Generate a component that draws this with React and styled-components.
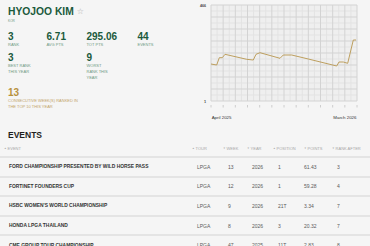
import React from 'react';
import styled, { createGlobalStyle } from 'styled-components';

const GlobalStyle = createGlobalStyle`
  html, body {
    margin: 0;
    padding: 0;
    background: #f5f5f5;
    overflow: hidden;
  }
  body {
    font-family: "Liberation Sans", Arial, sans-serif;
  }
`;

const Page = styled.div`
  width: 370px;
  height: 246px;
  overflow: hidden;
`;

const Top = styled.div`
  display: flex;
  height: 125px;
`;

const Profile = styled.div`
  flex: 1;
  padding: 6px 0 0 8px;
`;

const Name = styled.h1`
  margin: 0;
  font-size: 10.3px;
  line-height: 12px;
  font-weight: 700;
  color: #1b5a3c;
  display: flex;
  align-items: center;
  gap: 3px;
`;

const Star = styled.span`
  font-family: "DejaVu Sans", sans-serif;
  font-size: 8px;
  font-weight: 400;
  color: #a9a9a9;
`;

const Country = styled.div`
  font-size: 3.2px;
  line-height: 5px;
  margin-top: 1px;
  color: #6f9a83;
`;

const StatGrid = styled.div`
  display: grid;
  grid-template-columns: 38.5px 40px 51px auto;
  row-gap: 5.5px;
  margin-top: 7.5px;
`;

const Stat = styled.div`
  grid-column: span ${p => p.$span || 1};
`;

const Value = styled.div`
  font-size: 10px;
  line-height: 10px;
  font-weight: 700;
  color: ${p => (p.$gold ? '#b8913c' : '#1b5a3c')};
`;

const Label = styled.div`
  font-size: 4px;
  line-height: 6px;
  text-transform: uppercase;
  color: ${p => (p.$gold ? '#c3a468' : '#6f9a83')};
  max-width: ${p => p.$max || 25}px;
`;

const Streak = styled.div`
  margin-top: 7px;
`;

const Chart = styled.svg`
  width: 182px;
  height: 125px;
  display: block;
  flex: none;
`;

const Heading = styled.h2`
  margin: 5.3px 0 0 8px;
  font-size: 8.5px;
  line-height: 10px;
  font-weight: 700;
  color: #1f1f1f;
`;

const COLS = '188px 31px 24px 26px 26px 33px 1fr';

const HeadRow = styled.div`
  display: grid;
  grid-template-columns: ${COLS};
  height: 15.7px;
  align-items: center;
  padding-left: 9px;
  border-bottom: 2px solid #e4e4e4;
`;

const HeadCell = styled.div`
  font-size: 4px;
  color: #a8a8a8;
  white-space: nowrap;
  margin-left: ${p => (p.$flush ? 0 : -5)}px;
`;

const Arrow = styled.span`
  font-size: 2.6px;
  margin-right: 1px;
  vertical-align: 0.3px;
`;

const Row = styled.div`
  display: grid;
  grid-template-columns: ${COLS};
  height: 17.6px;
  align-items: center;
  padding-left: 9px;
  border-bottom: 2px solid #e4e4e4;
`;

const EventName = styled.div`
  font-size: 4.9px;
  font-weight: 700;
  color: #333;
  white-space: nowrap;
`;

const Cell = styled.div`
  font-size: 5px;
  color: #5a5a5a;
`;

const headers = [
  ['EVENT', '▲'],
  ['TOUR', '▲'],
  ['WEEK', '▼'],
  ['YEAR', '▼'],
  ['POSITION', '▲'],
  ['POINTS', '▼', true],
  ['RANK AFTER', '▼'],
];

const events = [
  ['FORD CHAMPIONSHIP PRESENTED BY WILD HORSE PASS', 'LPGA', '13', '2026', '1', '61.43', '3'],
  ['FORTINET FOUNDERS CUP', 'LPGA', '12', '2026', '1', '59.28', '4'],
  ["HSBC WOMEN'S WORLD CHAMPIONSHIP", 'LPGA', '9', '2026', '21T', '3.34', '7'],
  ['HONDA LPGA THAILAND', 'LPGA', '8', '2026', '3', '20.32', '7'],
  ['CME GROUP TOUR CHAMPIONSHIP', 'LPGA', '47', '2025', '11T', '2.83', '8'],
];

const line = [
  [23, 64], [28.7, 65], [31.3, 57.7], [34.3, 57.7], [37, 54.3], [58.7, 59.3],
  [65.3, 60], [68, 54.3], [72, 52.7], [92, 58.3], [95.3, 55], [103.7, 55],
  [120.3, 59], [148.7, 66], [151, 62], [155.3, 62], [159.7, 63.3], [165.3, 40], [168, 40],
];

const PX = 23, PY = 5, PW = 146, PH = 96;

function RankChart() {
  const majorX = Array.from({ length: 13 }, (_, i) => PX + (PW / 12) * i);
  const majorY = Array.from({ length: 9 }, (_, i) => PY + (PH / 8) * i);
  const minorX = Array.from({ length: 12 }, (_, i) => PX + (PW / 12) * (i + 0.5));
  const minorY = Array.from({ length: 8 }, (_, i) => PY + (PH / 8) * (i + 0.5));
  return (
    <Chart viewBox="0 0 182 125">
      <rect x={PX} y={PY} width={PW} height={PH} fill="#efefef" />
      {minorX.map(x => <line key={'mx' + x} x1={x} x2={x} y1={PY} y2={PY + PH} stroke="#e3e3e3" strokeWidth="1" />)}
      {minorY.map(y => <line key={'my' + y} x1={PX} x2={PX + PW} y1={y} y2={y} stroke="#e3e3e3" strokeWidth="1" />)}
      {majorX.map(x => <line key={'X' + x} x1={x} x2={x} y1={PY} y2={PY + PH} stroke="#d3d3d3" strokeWidth="1" />)}
      {majorY.map(y => <line key={'Y' + y} x1={PX} x2={PX + PW} y1={y} y2={y} stroke="#d3d3d3" strokeWidth="1" />)}
      {majorX.map(x => <line key={'t' + x} x1={x} x2={x} y1={105} y2={107.5} stroke="#c4c4c4" strokeWidth="0.8" />)}
      <polyline points={line.map(p => p.join(',')).join(' ')} fill="none" stroke="#b8964f" strokeWidth="0.9" />
      <text x="18" y="7.3" fontSize="3.6" fontWeight="700" fill="#444" textAnchor="end" fontFamily="Liberation Sans, sans-serif">466</text>
      <text x="18" y="102.6" fontSize="3.8" fontWeight="700" fill="#444" textAnchor="end" fontFamily="Liberation Sans, sans-serif">1</text>
      <text x="23.7" y="119.2" fontSize="4.4" fill="#333" fontFamily="Liberation Sans, sans-serif">April 2025</text>
      <text x="168.5" y="119.2" fontSize="4.4" fill="#333" textAnchor="end" fontFamily="Liberation Sans, sans-serif">March 2026</text>
    </Chart>
  );
}

export default function App() {
  return (
    <Page>
      <GlobalStyle />
      <Top>
        <Profile>
          <Name>HYOJOO KIM <Star>☆</Star></Name>
          <Country>KOR</Country>
          <StatGrid>
            <Stat><Value>3</Value><Label>Rank</Label></Stat>
            <Stat><Value>6.71</Value><Label>Avg pts</Label></Stat>
            <Stat><Value>295.06</Value><Label>Tot pts</Label></Stat>
            <Stat><Value>44</Value><Label>Events</Label></Stat>
            <Stat $span={2}><Value>3</Value><Label>Best rank this year</Label></Stat>
            <Stat $span={2}><Value>9</Value><Label>Worst rank this year</Label></Stat>
          </StatGrid>
          <Streak>
            <Value $gold>13</Value>
            <Label $gold $max={72}>Consecutive week(s) ranked in the top 10 this year</Label>
          </Streak>
        </Profile>
        <RankChart />
      </Top>
      <Heading>EVENTS</Heading>
      <HeadRow>
        {headers.map(([t, a, flush]) => (
          <HeadCell key={t} $flush={flush}><Arrow>{a}</Arrow>{t}</HeadCell>
        ))}
      </HeadRow>
      {events.map(ev => (
        <Row key={ev[0]}>
          <EventName>{ev[0]}</EventName>
          {ev.slice(1).map((v, i) => <Cell key={i}>{v}</Cell>)}
        </Row>
      ))}
    </Page>
  );
}
